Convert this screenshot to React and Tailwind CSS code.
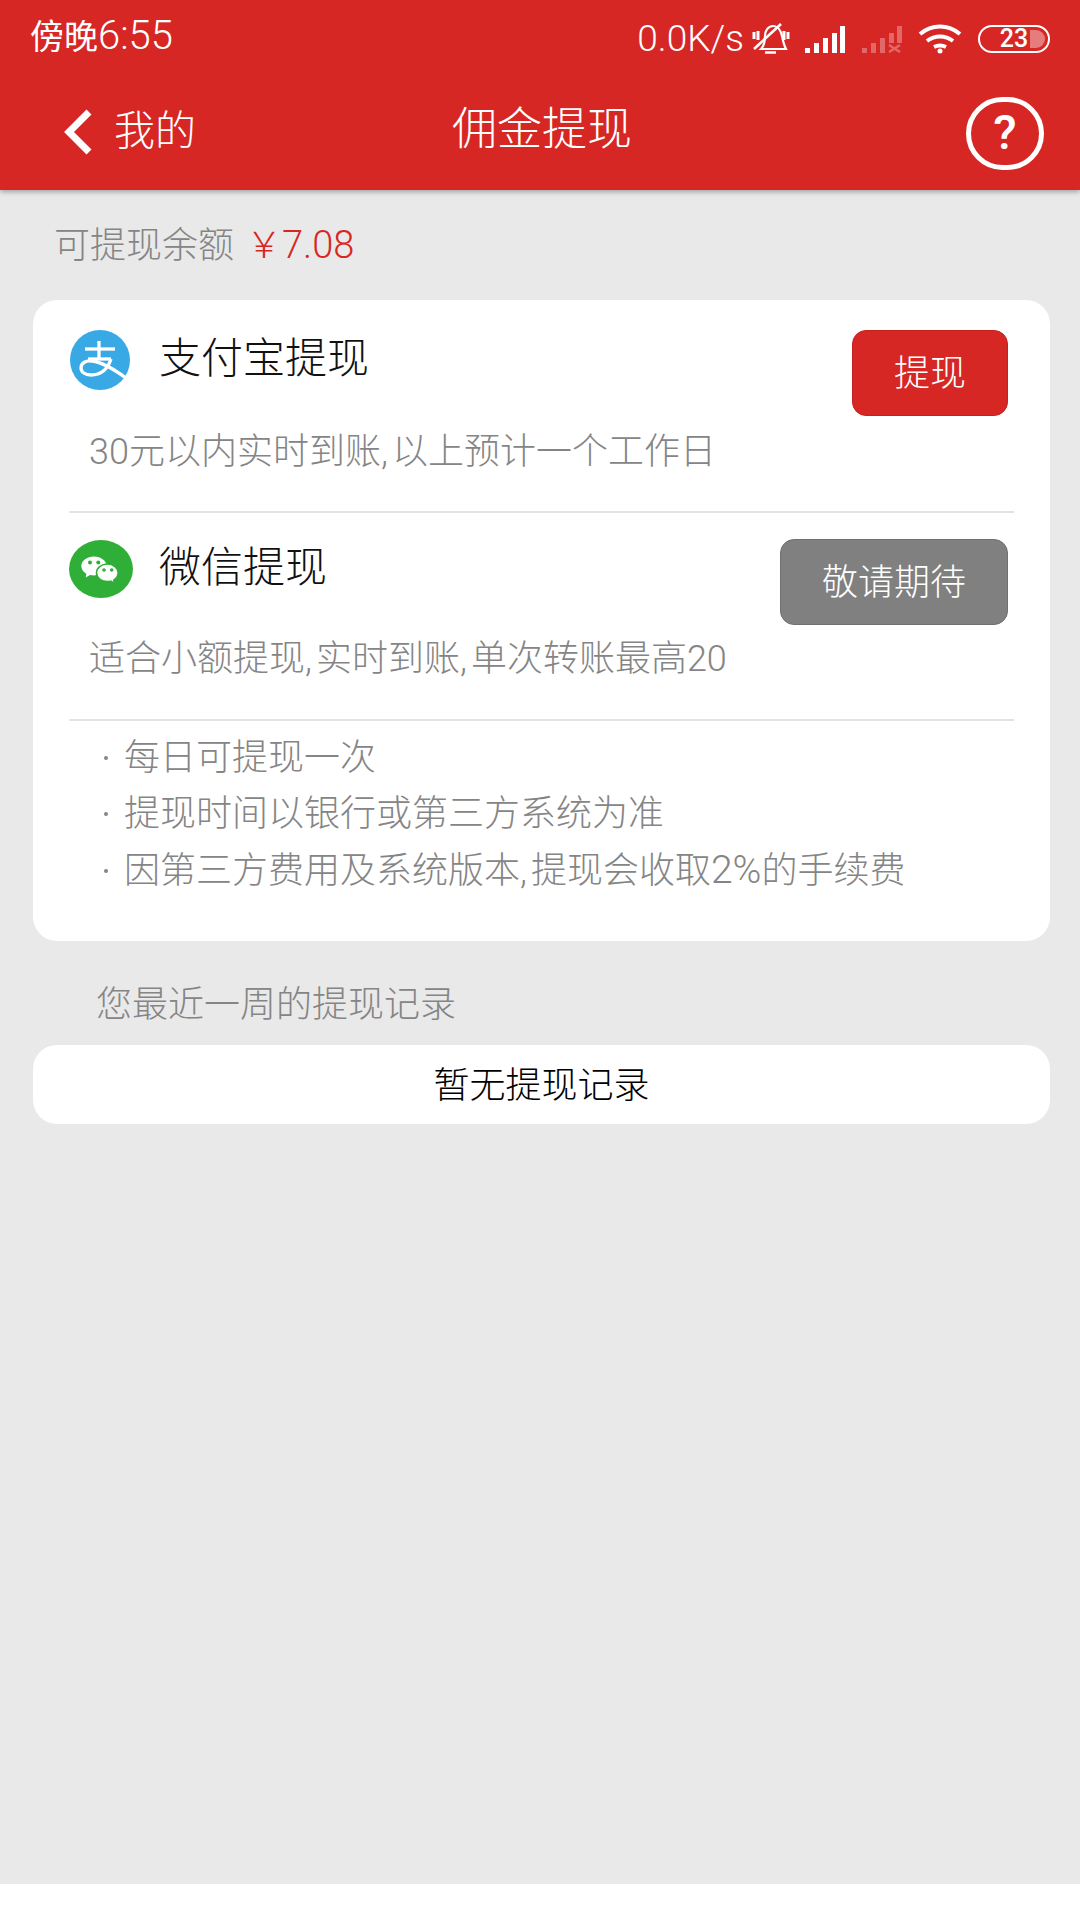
const FONT = "font-['Roboto','Noto_Sans_CJK_SC',sans-serif]";

function Spaced({ text }) {
  return text.split(",").map((part, i) => (
    <span key={i}>
      {i > 0 && <span className="mr-[4px]">,</span>}
      {part.includes("2%") ? (
        <>
          {part.split("2%")[0]}
          <span className="text-[39px]">2%</span>
          {part.split("2%")[1]}
        </>
      ) : (
        part
      )}
    </span>
  ));
}

function Bars({ dim }) {
  const bars = [
    [0, 22, 5],
    [9, 17, 10],
    [18, 12, 15],
    [27, 7, 20],
    [35, 0, 27],
  ];
  return (
    <svg width="41" height="28" viewBox="0 0 41 28" className={dim ? "ml-[16px] opacity-30" : "ml-[15px]"}>
      {bars.map(([x, y, h], i) => {
        if (dim && i === 3) return <rect key={i} x={x} y={8} width="5" height={10} fill="#fff" />;
        if (dim && i === 4) return <rect key={i} x={x} y={1} width="5" height={17} fill="#fff" />;
        return <rect key={i} x={x} y={y + 1} width="5" height={h} fill="#fff" />;
      })}
      {dim && <path d="M27 20l11 7M38 20l-11 7" stroke="#fff" strokeWidth="2.500" fill="none" />}
    </svg>
  );
}

function StatusBar() {
  return (
    <div className="flex h-[74px] items-center pl-[30px] pr-[30px] pt-[3px] text-white">
      <span className="mt-[3px] leading-[44px]">
        <span className="text-[34px] font-normal">傍晚</span>
        <span className="text-[40px] font-light">6:55</span>
      </span>
      <div className="ml-auto flex items-center">
        <span className="text-[37px] leading-[44px] font-light">0.0K/s</span>
        <svg width="38" height="32" viewBox="0 0 38 32" className="ml-[8px]" fill="none" stroke="#fff">
          <path d="M9 26c3-3 4-8 4-13 0-5 3-10 8-10s8 5 9 10c1 5 2 9 4 13z" strokeWidth="2.200" />
          <path d="M13 29.500h11" strokeWidth="2.500" />
          <path d="M2 26L29 1" strokeWidth="2.600" />
          <path d="M2 9v7M6 8v9M32 8v9M36 9v7" strokeWidth="3" />
        </svg>
        <Bars />
        <Bars dim />
        <svg width="44" height="30" viewBox="0 0 44 30" className="ml-[15px]" fill="none" stroke="#fff" strokeWidth="4">
          <path d="M2 10c12-10 28-10 40 0" />
          <path d="M9 17c8-6 18-6 26 0" />
          <path d="M16 23c4-2 8-2 12 0" />
          <circle cx="22" cy="27" r="2.500" fill="#fff" stroke="none" />
        </svg>
        <div className="relative ml-[16px] flex h-[28px] w-[72px] items-center justify-center rounded-[14px] border-2 border-white">
          <span className="absolute right-[3px] top-[3px] h-[18px] w-[15px] rounded-r-[9px] bg-white/40" />
          <span className="relative text-[25px] leading-[24px] font-medium">23</span>
        </div>
      </div>
    </div>
  );
}

function NavBar() {
  return (
    <div className="flex h-[116px] items-center pl-[63px] pr-[36px] text-white">
      <div className="flex w-[300px] items-center">
        <svg width="30" height="46" viewBox="0 0 30 46" fill="none" stroke="#fff" strokeWidth="7">
          <path d="M26 3L6 23l20 20" />
        </svg>
        <span className="-mt-[2px] ml-[21px] text-[41px] leading-[50px] font-light">我的</span>
      </div>
      <span className="-mt-[4px] ml-[89px] text-[45px] leading-[54px] font-light">佣金提现</span>
      <div className="ml-auto mt-[2px] flex h-[73px] w-[78px] items-center justify-center rounded-full border-[5px] border-white">
        <span className="text-[48px] leading-[48px] font-medium">?</span>
      </div>
    </div>
  );
}

function AlipayIcon() {
  return (
    <svg width="62" height="60" viewBox="0 0 62 60">
      <circle cx="31" cy="30" r="30" fill="#38a9e4" />
      <g fill="none" stroke="#fff" strokeWidth="3.300">
        <path d="M16 19h30" />
        <path d="M30 11v18" />
        <path d="M19 29h23" />
        <path d="M42 29c-3 9-9 16-20 16-6 0-10-3-10-7 0-5 5-8 11-7 10 1 23 9 34 17" />
      </g>
    </svg>
  );
}

function WechatIcon() {
  return (
    <svg width="64" height="58" viewBox="0 0 64 58">
      <ellipse cx="32" cy="29" rx="32" ry="29" fill="#2fae38" />
      <path d="M25 16.500c-7 0-12.700 4.300-12.700 9.600 0 3.200 2 6 5 7.700l-.5 3.700 4.200-2.600c1.300.3 2.700.5 4 .5 7 0 12.700-4.300 12.700-9.300S32 16.500 25 16.500z" fill="#fff" />
      <circle cx="21" cy="22.500" r="2" fill="#2fae38" />
      <circle cx="29.300" cy="22.500" r="2" fill="#2fae38" />
      <path d="M38.300 24c-6 0-10.800 4-10.800 8.800s4.800 8.800 10.800 8.800c1.300 0 2.400-.2 3.500-.5l3.600 2.200-.6-3.300c2.600-1.600 4.300-4.200 4.300-7.200 0-4.800-4.800-8.800-10.800-8.800z" fill="#fff" stroke="#2fae38" strokeWidth="1.500" />
      <circle cx="35" cy="30" r="1.800" fill="#2fae38" />
      <circle cx="42.700" cy="30" r="1.800" fill="#2fae38" />
    </svg>
  );
}

function Method({ icon, title, button, buttonClass, desc, blockClass, descClass }) {
  return (
    <div className={`border-b-2 border-[#e3e3e3] ${blockClass}`}>
      <div className="flex h-[86px] items-start justify-between pr-[6px]">
        <div className="flex items-center">
          <div className="flex h-[60px] w-[90px] items-center">{icon}</div>
          <span className="-mt-[3px] text-[42px] leading-[60px] font-light text-[#111]">{title}</span>
        </div>
        <div className={`flex h-[86px] items-center justify-center rounded-[14px] border text-[36px] leading-[44px] font-light text-white ${buttonClass}`}>
          <span className="mt-[2px]">{button}</span>
        </div>
      </div>
      <p className={`pl-[20px] text-[36px] leading-[44px] font-light text-[#858585] ${descClass}`}>
        <Spaced text={desc} />
      </p>
    </div>
  );
}

export default function App() {
  return (
    <div className={`flex h-[1920px] w-[1080px] flex-col bg-white ${FONT}`}>
      <header className="relative z-10 h-[190px] bg-[#d62725] shadow-[0_2px_5px_rgba(0,0,0,0.3)]">
        <StatusBar />
        <NavBar />
      </header>
      <main className="h-[1694px] bg-[#e9e9e9] pl-[33px] pr-[30px]">
        <div className="flex h-[110px] items-center pl-[21px] pt-[1px] text-[36px] leading-[44px] font-light">
          <span className="text-[#858585]">可提现余额</span>
          <span className="ml-[12px] text-[#d62725]">
            ￥<span className="text-[38px]">7.08</span>
          </span>
        </div>
        <section className="rounded-[24px] bg-white px-[36px] pb-[42px]">
          <Method
            icon={<AlipayIcon />}
            title="支付宝提现"
            button="提现"
            buttonClass="w-[156px] border-[#c42220] bg-[#d62725]"
            desc="30元以内实时到账,以上预计一个工作日"
            blockClass="pt-[30px]"
            descClass="pt-[14px] pb-[37px]"
          />
          <Method
            icon={<WechatIcon />}
            title="微信提现"
            button="敬请期待"
            buttonClass="w-[228px] border-[#707070] bg-[#808080]"
            desc="适合小额提现,实时到账,单次转账最高20"
            blockClass="pt-[26px]"
            descClass="pt-[12px] pb-[38px]"
          />
          <ul className="pt-[9px] text-[36px] leading-[56px] font-light text-[#858585]">
            {["每日可提现一次", "提现时间以银行或第三方系统为准", "因第三方费用及系统版本,提现会收取2%的手续费"].map((t) => (
              <li key={t} className="flex items-center pl-[35px]">
                <span className="mr-[16px] h-[4px] w-[4px] rounded-full bg-[#858585]" />
                <span>
                  <Spaced text={t} />
                </span>
              </li>
            ))}
          </ul>
        </section>
        <div className="pl-[63px] pt-[42px] pb-[18px] text-[36px] leading-[44px] font-light text-[#858585]">您最近一周的提现记录</div>
        <div className="flex h-[79px] items-center justify-center rounded-[24px] bg-white text-[36px] leading-[44px] font-light text-[#000]">
          <span className="mt-[2px]">暂无提现记录</span>
        </div>
      </main>
      <div className="flex-1 bg-white" />
    </div>
  );
}
